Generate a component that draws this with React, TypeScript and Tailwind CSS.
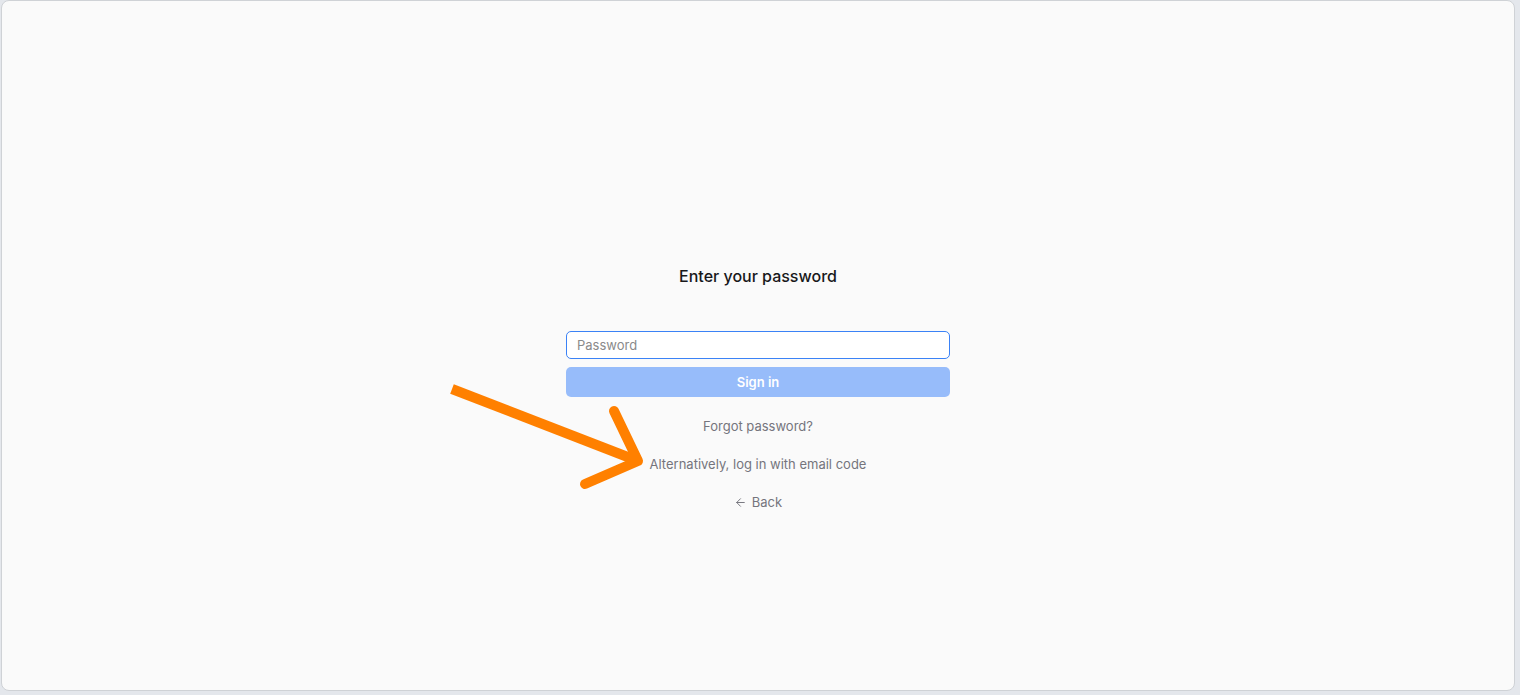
import React from "react";

export default function App() {
  return (
    <div
      className="relative h-[695px] w-full bg-[#e4e7ec] pl-[1px] pr-[5px] pb-[4px]"
      style={{ fontFamily: "Inter, 'Noto Sans', sans-serif" }}
    >
      <div className="h-full w-full rounded-[8px] border border-[#cfd2d6] bg-[#fafafa] flex flex-col items-center pt-[263px]">
        <h1 className="text-[16px] leading-[24px] font-medium text-[#18181b]">Enter your password</h1>
        <div className="mt-[43px] w-[384px] flex flex-col">
          <input
            type="password"
            placeholder="Password"
            className="h-[28px] w-full rounded-[5px] border border-[#3b82f6] bg-white px-[10px] text-[13px] text-[#18181b] placeholder:text-[#8a8a8a] outline-none"
          />
          <button className="mt-[8px] h-[30px] w-full rounded-[5px] bg-[#97bcfa] pt-[2px] text-[13px] font-semibold text-white">
            Sign in
          </button>
        </div>
        <div className="mt-[20px] flex flex-col items-center gap-[19px] text-[13px] leading-[19px] text-[#75757d]">
          <span>Forgot password?</span>
          <span>Alternatively, log in with email code</span>
          <span className="flex items-center gap-[5px]">
            <svg width="13" height="13" viewBox="0 0 24 24" fill="none" stroke="currentColor" strokeWidth="1.8" strokeLinecap="round" strokeLinejoin="round">
              <path d="M19 12H5" />
              <path d="M12 19l-7-7 7-7" />
            </svg>
            Back
          </span>
        </div>
      </div>
      <svg className="absolute left-0 top-0 pointer-events-none" width="1520" height="695">
        <g stroke="#ff8000" strokeWidth="10" fill="none" strokeLinecap="round" strokeLinejoin="round">
          <path d="M452 389 L638 461" strokeLinecap="butt" />
          <path d="M614 411 L638 461 L585 484" />
        </g>
      </svg>
    </div>
  );
}
